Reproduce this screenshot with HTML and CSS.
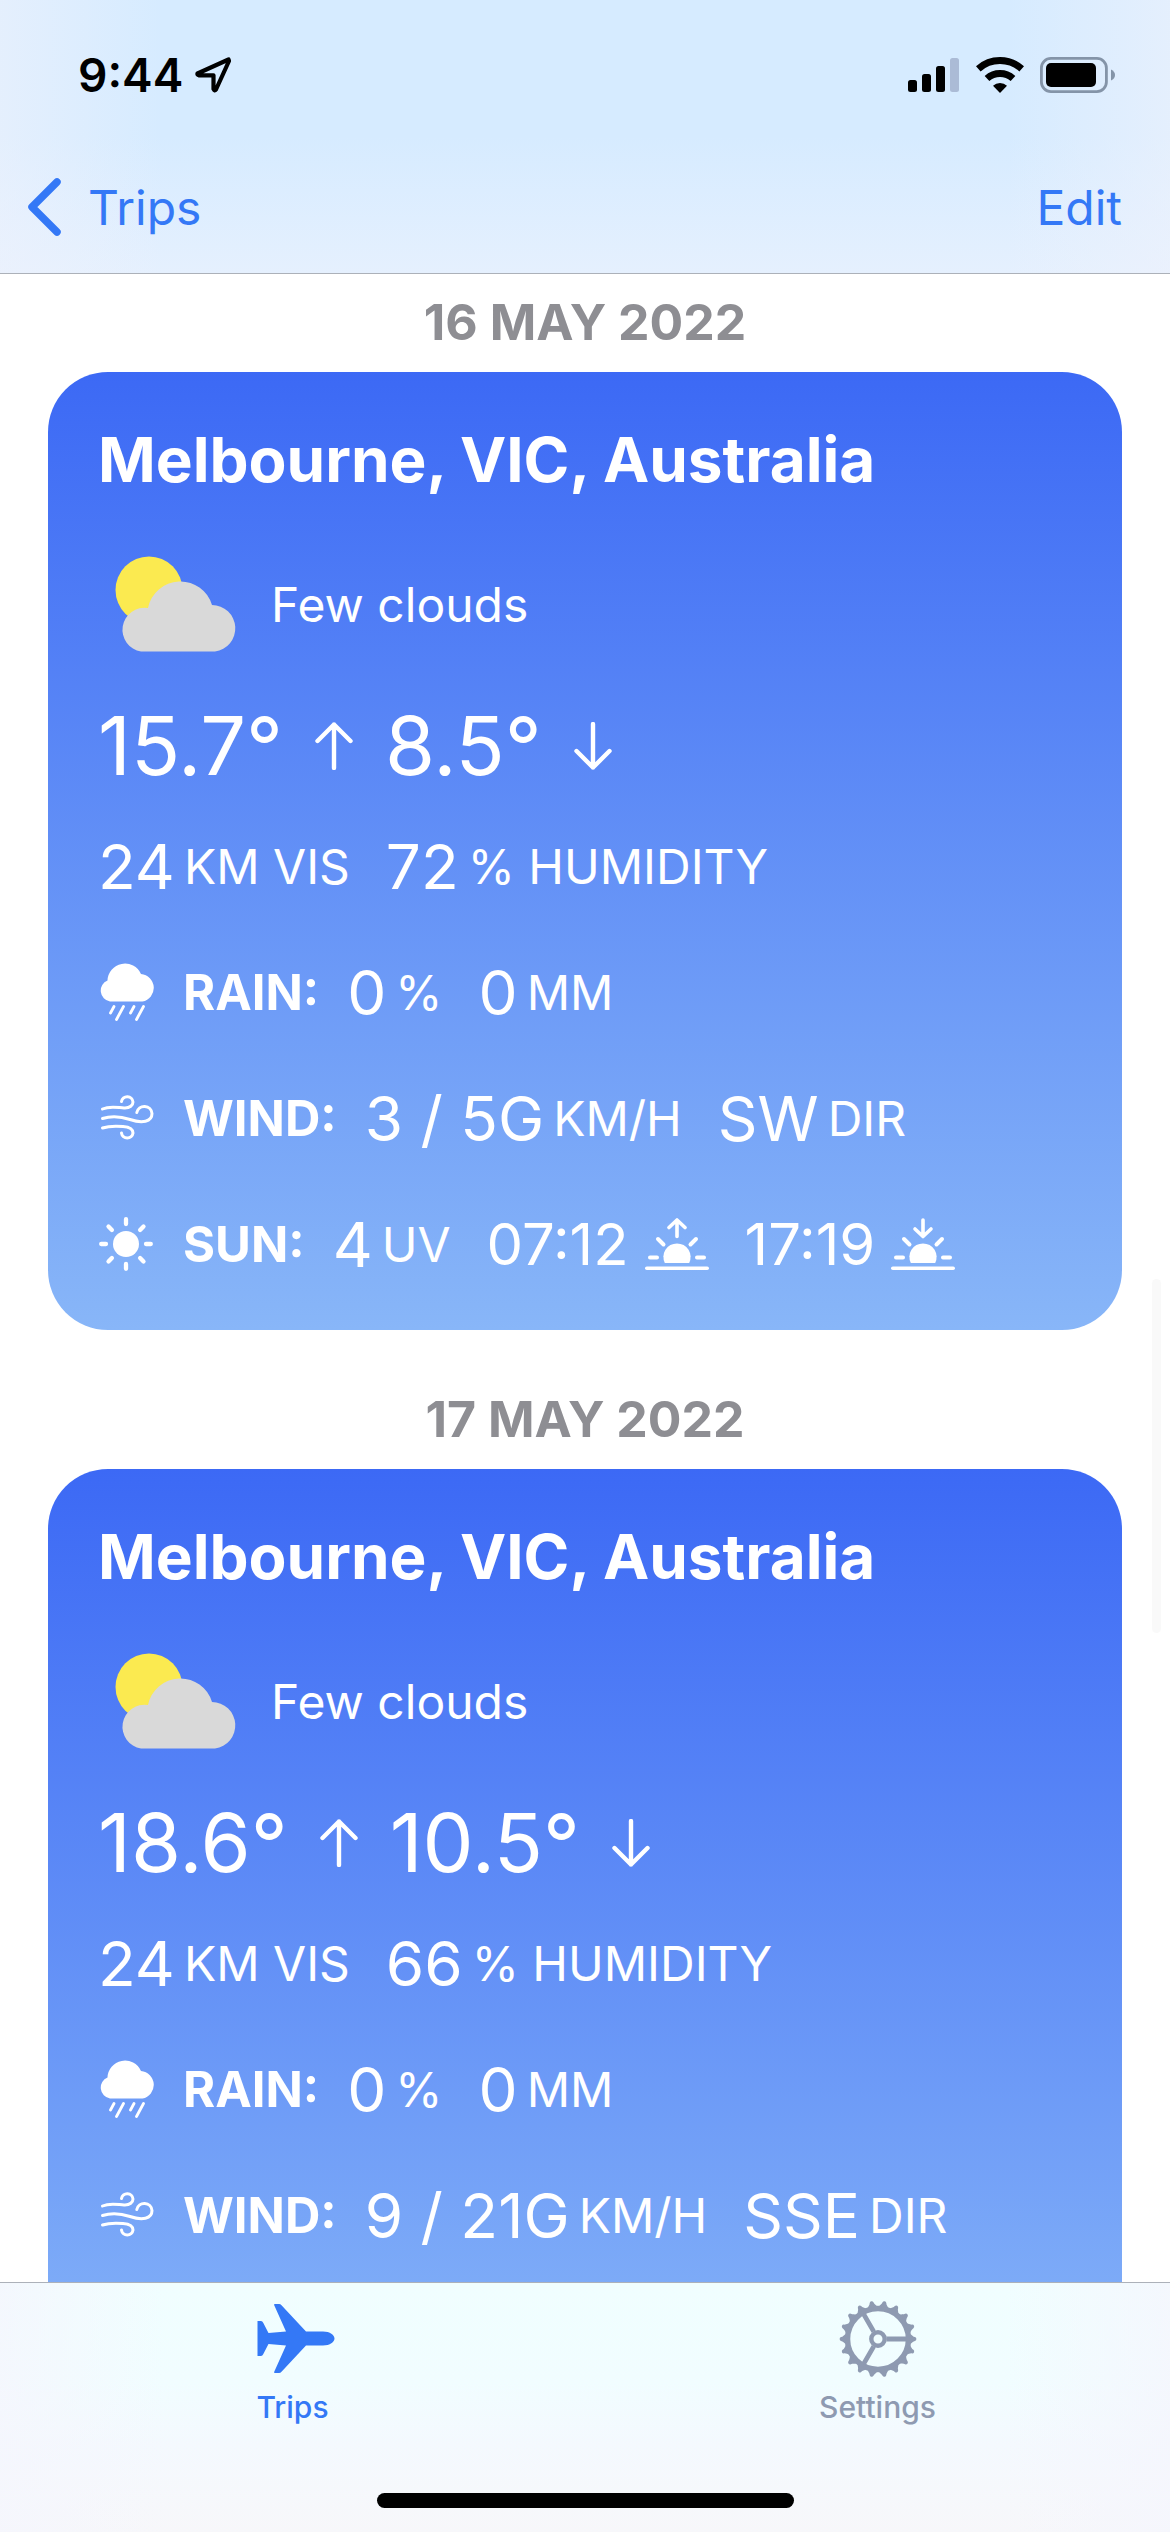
FILE: index.html
```html
<!DOCTYPE html>
<html lang="en">
<head>
<meta charset="utf-8">
<meta name="viewport" content="width=device-width, initial-scale=1">
<title>Trips</title>
<link rel="stylesheet" href="styles.css">
</head>
<body>
<svg class="sprite" aria-hidden="true">
  <symbol id="few-clouds" viewBox="0 0 122 96">
    <circle cx="34" cy="34" r="33.500" fill="#fbea50"/>
    <path d="M26 95.500A22 22 0 0 1 33 52A33 33 0 0 1 97 49A23.350 23.350 0 0 1 100 95.500Z" fill="#d9d9d9"/>
  </symbol>
  <symbol id="arrow-up" viewBox="0 0 38 48">
    <path d="M19 46V2.500M2.500 19L19 2.500L35.500 19" fill="none" stroke="currentColor" stroke-width="4.400" stroke-linecap="round" stroke-linejoin="round"/>
  </symbol>
  <symbol id="arrow-down" viewBox="0 0 38 48">
    <path d="M19 2V45.500M2.500 29L19 45.500L35.500 29" fill="none" stroke="currentColor" stroke-width="4.400" stroke-linecap="round" stroke-linejoin="round"/>
  </symbol>
  <symbol id="rain" viewBox="0 0 58 58">
    <path d="M11 38.500A11 11 0 0 1 8.500 17.500A17.500 17.500 0 0 1 42 11A13.900 13.900 0 0 1 43.500 38.500Z" fill="currentColor"/>
    <path d="M15 43.500L11.500 50M24.500 43.500L17.500 56.500M35 43.500L31.500 50M44.500 43.500L37.500 56.500" fill="none" stroke="currentColor" stroke-width="2.800" stroke-linecap="round"/>
  </symbol>
  <symbol id="wind" viewBox="0 0 58 46">
    <path d="M3.500 14C11 10.500 18 12.500 25 13C31 13.400 34 10 34 7A5.800 5.800 0 0 0 22.500 6.500M3.500 23.500C13 20.500 22 21.500 31 24.500C43 28.500 53 27 53 18.500A7.700 7.700 0 0 0 37.800 17.500M3.500 33C11 30.500 18 31 24 31.500C30 32 34 33.500 34 38A5.800 5.800 0 0 1 22.500 38" fill="none" stroke="currentColor" stroke-width="3" stroke-linecap="round"/>
  </symbol>
  <symbol id="sun" viewBox="0 0 58 54">
    <circle cx="27" cy="27" r="13" fill="currentColor"/>
    <path d="M27 2.200V7M27 47V51.800M2.200 27H7M47 27H51.800M9.500 9.500L12.900 12.900M41.100 41.100L44.500 44.500M44.500 9.500L41.100 12.900M12.900 41.100L9.500 44.500" fill="none" stroke="currentColor" stroke-width="4.300" stroke-linecap="round"/>
  </symbol>
  <symbol id="half-sun" viewBox="0 0 64 52">
    <path d="M19.800 45A13.600 13.600 0 1 1 44.200 45Z" fill="currentColor"/>
    <path d="M5 39.600H12M52 39.600H59M13 21L18.500 26.500M51 21L45.500 26.500" fill="none" stroke="currentColor" stroke-width="4" stroke-linecap="round"/>
    <path d="M1.800 50.200H62.200" stroke="currentColor" stroke-width="3.600" stroke-linecap="round"/>
  </symbol>
  <symbol id="sunrise" viewBox="0 0 64 52">
    <use href="#half-sun"/>
    <path d="M32 18.500V2M24 9.500L32 2L40 9.500" fill="none" stroke="currentColor" stroke-width="3.600" stroke-linecap="round" stroke-linejoin="round"/>
  </symbol>
  <symbol id="sunset" viewBox="0 0 64 52">
    <use href="#half-sun"/>
    <path d="M32 2V18.500M24 11L32 18.500L40 11" fill="none" stroke="currentColor" stroke-width="3.600" stroke-linecap="round" stroke-linejoin="round"/>
  </symbol>
</svg>

<div class="app">
  <header class="top-bar">
    <div class="status">
      <div class="status-side">
        <time>9:44</time>
        <svg viewBox="0 0 36 36" width="36" height="36" aria-hidden="true"><path d="M33.500 2.500L2.500 16.500Q2 18 4 18.300H18.500V32Q19.500 34.500 21 32.500L34 4Z" fill="none" stroke="currentColor" stroke-width="4.200" stroke-linejoin="round"/></svg>
      </div>
      <div class="status-side status-right">
        <svg viewBox="0 0 52 36" width="52" height="36" aria-hidden="true">
          <rect x="0" y="23" width="9" height="12" rx="2.500"/><rect x="14" y="17" width="9" height="18" rx="2.500"/><rect x="28" y="9" width="9" height="26" rx="2.500"/><rect x="42" y="1" width="9" height="34" rx="2.500" fill="#abbbd6"/>
        </svg>
        <svg viewBox="0 0 48 36" width="48" height="36" aria-hidden="true">
          <path d="M2.300 11.900A32.500 32.500 0 0 1 45.700 11.900M11 21.500A19.500 19.500 0 0 1 37 21.500" fill="none" stroke="#000" stroke-width="7"/>
          <path d="M24 36L17 28.700A10.500 10.500 0 0 1 31 28.700Z"/>
        </svg>
        <svg viewBox="0 0 76 36" width="76" height="36" aria-hidden="true">
          <rect x="1.400" y="1.400" width="65" height="33.200" rx="9.500" fill="none" stroke="#8494a8" stroke-width="2.800"/>
          <rect x="6" y="6" width="50" height="24" rx="5"/>
          <path d="M71 12.500Q75 14.500 75 18T71 23.500Z" fill="#8494a8"/>
        </svg>
      </div>
    </div>
    <nav class="nav-bar">
      <a class="back" href="#trips">
        <svg viewBox="0 0 34 58" width="34" height="58" aria-hidden="true"><path d="M29 4L4 29L29 54" fill="none" stroke="currentColor" stroke-width="7.500" stroke-linecap="round" stroke-linejoin="round"/></svg>
        Trips
      </a>
      <button class="edit" type="button">Edit</button>
    </nav>
  </header>

  <main class="days">
    <h2 class="date">16 MAY 2022</h2>
    <article class="card">
      <h3 class="place">Melbourne, VIC, Australia</h3>
      <p class="summary"><svg class="summary-icon"><use href="#few-clouds"/></svg>Few clouds</p>
      <p class="temps">15.7° <svg class="arrow"><use href="#arrow-up"/></svg> 8.5° <svg class="arrow"><use href="#arrow-down"/></svg></p>
      <p class="row"><span class="stat"><b>24</b>KM VIS</span><span class="stat"><b>72</b>% HUMIDITY</span></p>
      <p class="row"><svg class="row-icon"><use href="#rain"/></svg><strong>RAIN:</strong><span class="stat"><b>0</b>%</span><span class="stat"><b>0</b>MM</span></p>
      <p class="row"><svg class="row-icon"><use href="#wind"/></svg><strong>WIND:</strong><span class="stat"><b>3 / 5G</b>KM/H</span><span class="stat"><b>SW</b>DIR</span></p>
      <p class="row"><svg class="row-icon"><use href="#sun"/></svg><strong>SUN:</strong><span class="stat"><b>4</b>UV</span><span class="stat stat-time"><time>07:12</time><svg class="horizon"><use href="#sunrise"/></svg></span><span class="stat stat-time"><time>17:19</time><svg class="horizon"><use href="#sunset"/></svg></span></p>
    </article>

    <h2 class="date">17 MAY 2022</h2>
    <article class="card">
      <h3 class="place">Melbourne, VIC, Australia</h3>
      <p class="summary"><svg class="summary-icon"><use href="#few-clouds"/></svg>Few clouds</p>
      <p class="temps">18.6° <svg class="arrow"><use href="#arrow-up"/></svg> 10.5° <svg class="arrow"><use href="#arrow-down"/></svg></p>
      <p class="row"><span class="stat"><b>24</b>KM VIS</span><span class="stat"><b>66</b>% HUMIDITY</span></p>
      <p class="row"><svg class="row-icon"><use href="#rain"/></svg><strong>RAIN:</strong><span class="stat"><b>0</b>%</span><span class="stat"><b>0</b>MM</span></p>
      <p class="row"><svg class="row-icon"><use href="#wind"/></svg><strong>WIND:</strong><span class="stat"><b>9 / 21G</b>KM/H</span><span class="stat"><b>SSE</b>DIR</span></p>
    </article>
  </main>
  <div class="scroll-thumb"></div>

  <footer class="bottom-bar">
    <nav class="tabs">
      <a class="tab tab-current" href="#trips">
        <svg class="tab-icon" viewBox="-3 0 80 80" overflow="visible" aria-hidden="true"><path d="M1.500 22H5Q6.500 22.300 7.200 23.700L12.500 34L30 32.500L18 5.700Q18 5 19 5H23Q24.500 5 25.500 6.200L50 32.500H67C74 32.500 78.500 36 78.500 39.500S74 46.500 67 46.500H50L25.500 72.800Q24.500 74 23 74H19Q18 74 18 73.300L30 46.500L12.500 45L7.200 55.300Q6.500 56.700 5 57H1.500Z" fill="currentColor"/></svg>
        Trips
      </a>
      <a class="tab" href="#settings">
        <svg class="tab-icon" viewBox="-40 -40 80 80" aria-hidden="true">
          <circle r="30.500" fill="none" stroke="currentColor" stroke-width="5.500"/>
          <circle r="6.700" fill="none" stroke="currentColor" stroke-width="4.400"/>
          <path d="M8.500 0H29M-4.250 -7.360L-14.500 -25.100M-4.250 7.360L-14.500 25.100" fill="none" stroke="currentColor" stroke-width="4.800"/>
          <g id="teeth">
            <path id="tooth" d="M32 -5C34 -4 35 -2.200 37 -1.900A2 2 0 0 1 37 1.900C35 2.200 34 4 32 5Z" fill="currentColor"/>
            <use href="#tooth" transform="rotate(20)"/><use href="#tooth" transform="rotate(40)"/><use href="#tooth" transform="rotate(60)"/><use href="#tooth" transform="rotate(80)"/><use href="#tooth" transform="rotate(100)"/>
          </g>
          <use href="#teeth" transform="rotate(120)"/><use href="#teeth" transform="rotate(240)"/>
        </svg>
        Settings
      </a>
    </nav>
    <div class="home-indicator"></div>
  </footer>
</div>
</body>
</html>
```

FILE: styles.css
```css
* {
  box-sizing: border-box;
}

body {
  margin: 0;
  background: #fff;
  color: #000;
  font-family: Inter, "Liberation Sans", sans-serif;
  font-size: 48px;
}

h2, h3, p {
  margin: 0;
}

svg {
  flex: none;
}

.sprite {
  position: absolute;
  width: 0;
  height: 0;
}

.app {
  position: relative;
  display: flex;
  flex-direction: column;
  height: 100vh;
}

/* Translucent bars */
.top-bar {
  flex: none;
  border-bottom: 1px solid #acb1b9;
  background:
    linear-gradient(90deg, #eef2fc99 0, #eef2fc00 14%, #eef2fc00 86%, #eef2fc99 100%),
    linear-gradient(#d6ebff 0, #d6ebff 50%, #e5f0fe 100%);
}

.status {
  display: flex;
  align-items: center;
  justify-content: space-between;
  height: 141px;
  padding: 8px 54px 0 78px;
}

.status-side {
  display: flex;
  align-items: center;
  gap: 12px;
  font-size: 46px;
  font-weight: 600;
}

.status-right {
  gap: 16px;
}

.nav-bar {
  display: flex;
  align-items: center;
  justify-content: space-between;
  height: 132px;
  padding: 0 48px 0 28px;
}

.back {
  display: flex;
  align-items: center;
  gap: 26px;
  color: #3478f6;
  text-decoration: none;
}

.edit {
  padding: 0;
  border: 0;
  background: none;
  color: #3478f6;
  font: inherit;
}

/* Day list */
.days {
  flex: 1;
  min-height: 0;
  padding: 18px 48px 0;
  overflow-y: auto;
  scrollbar-width: none;
}

.date {
  margin-bottom: 20px;
  color: #8e8e93;
  font-size: 50px;
  font-weight: 700;
  line-height: 60px;
  text-align: center;
}

.card {
  min-height: 958px;
  margin-bottom: 59px;
  padding: 48px 48px 46px 50px;
  border-radius: 60px;
  background: linear-gradient(#3c69f5, #88b6f8);
  color: #fff;
}

.place {
  font-size: 62px;
  font-weight: 700;
  line-height: 80px;
}

.summary {
  display: flex;
  align-items: center;
  gap: 34px;
  height: 120px;
  margin: 44px 0 32px;
  padding-left: 17px;
}

.summary-icon {
  width: 122px;
  height: 96px;
}

.temps {
  display: flex;
  align-items: center;
  gap: 32px;
  margin-bottom: 30px;
  font-size: 81px;
  line-height: 100px;
}

.arrow {
  width: 38px;
  height: 48px;
}

.row {
  display: flex;
  align-items: center;
  gap: 36px;
  height: 80px;
  margin-bottom: 46px;
  white-space: nowrap;
}

.row:last-child {
  margin-bottom: 0;
}

.row strong {
  margin: 0 -8px 0 -10px;
  font-size: 49px;
  font-weight: 700;
}

.row-icon {
  width: 58px;
  height: 58px;
  margin-left: 1px;
}

.stat {
  display: flex;
  align-items: center;
  gap: 9px;
}

.stat-time {
  gap: 16px;
}

.stat b {
  font-size: 62px;
  font-weight: 400;
}

.stat time {
  font-size: 58px;
}

.horizon {
  width: 64px;
  height: 52px;
}

.scroll-thumb {
  position: absolute;
  top: 1279px;
  right: 9px;
  width: 9px;
  height: 354px;
  border-radius: 5px;
  background: #f9f9f9;
}

/* Tab bar */
.bottom-bar {
  flex: none;
  padding-bottom: 24px;
  border-top: 1px solid #acb1b9;
  background:
    linear-gradient(90deg, #f5f6fdcc 0, #f5f6fd00 14%, #f5f6fd00 86%, #f5f6fdcc 100%),
    linear-gradient(#f0feff 0, #f1fdff 40%, #f4f9fe 65%, #f7f7fa 100%);
}

.tabs {
  display: grid;
  grid-template-columns: 1fr 1fr;
  padding: 16px 0 66px;
}

.tab {
  display: flex;
  flex-direction: column;
  align-items: center;
  gap: 8px;
  color: #8e9ab1;
  font-size: 30px;
  font-weight: 500;
  line-height: 40px;
  text-decoration: none;
}

.tab-current {
  color: #3478f6;
}

.tab-icon {
  width: 80px;
  height: 80px;
}

.home-indicator {
  width: 417px;
  height: 15px;
  margin: 0 auto;
  border-radius: 8px;
  background: #000;
}
```
